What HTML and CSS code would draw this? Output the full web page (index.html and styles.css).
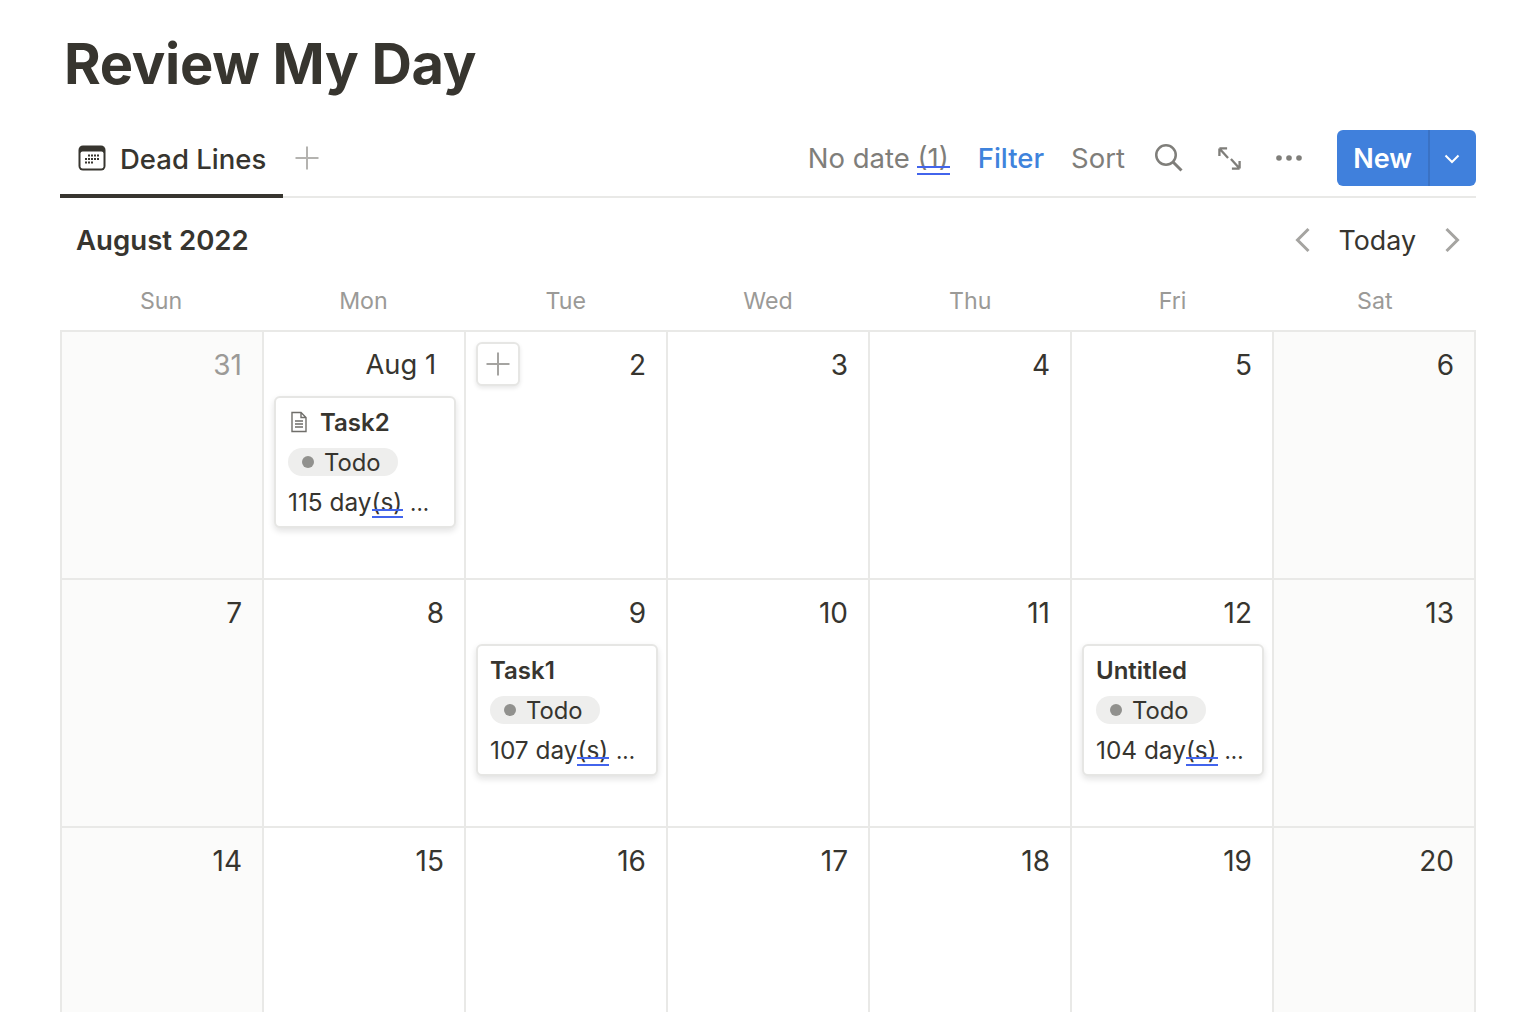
FILE: index.html
```html
<!DOCTYPE html>
<html lang="en">
<head>
<meta charset="utf-8">
<title>Review My Day</title>
<link rel="stylesheet" href="styles.css">
</head>
<body>
<main class="page">
  <h1 class="title">Review My Day</h1>
  <div class="toolbar">
    <div class="tab">
      <svg class="tab-icon" width="28" height="26" viewBox="0 0 28 26"><rect x="0.500" y="0.500" width="27" height="25" rx="4.500" fill="#37352f"/><rect x="2.500" y="6.500" width="23" height="17" rx="2" fill="#fff"/><g fill="#37352f"><rect x="10" y="9.500" width="2" height="2"/><rect x="13" y="9.500" width="2" height="2"/><rect x="16" y="9.500" width="2" height="2"/><rect x="19" y="9.500" width="2" height="2"/><rect x="7" y="13" width="2" height="2"/><rect x="10" y="13" width="2" height="2"/><rect x="13" y="13" width="2" height="2"/><rect x="16" y="13" width="2" height="2"/><rect x="19" y="13" width="2" height="2"/><rect x="7" y="16.500" width="2" height="2"/><rect x="10" y="16.500" width="2" height="2"/><rect x="13" y="16.500" width="2" height="2"/></g></svg>
      <span>Dead Lines</span>
    </div>
    <svg class="add-view" width="26" height="26" viewBox="0 0 26 26"><path d="M13 1.500v23M1.500 13h23" stroke="#b4b3b0" stroke-width="2" fill="none"/></svg>
    <div class="actions">
      <span class="action no-date">No date <span class="spell">(1)</span></span>
      <span class="action filter">Filter</span>
      <span class="action sort">Sort</span>
      <svg class="ico-search" width="30" height="30" viewBox="0 0 30 30"><circle cx="12" cy="12" r="9.750" fill="none" stroke="#7f7e7a" stroke-width="2.500"/><path d="M19 19l8.500 8.500" stroke="#7f7e7a" stroke-width="3" fill="none"/></svg>
      <svg class="ico-expand" width="25" height="25" viewBox="0 0 26 26"><path d="M2.500 2.500l9 10M2.500 2.500v8M2.500 2.500h8M23.500 23.500l-9-10M23.500 23.500v-8M23.500 23.500h-8" stroke="#7f7e7a" stroke-width="2.400" fill="none"/></svg>
      <svg class="ico-more" width="28" height="8" viewBox="0 0 28 8"><circle cx="4" cy="4" r="2.800" fill="#7f7e7a"/><circle cx="14" cy="4" r="2.800" fill="#7f7e7a"/><circle cx="24" cy="4" r="2.800" fill="#7f7e7a"/></svg>
      <div class="new-btn">
        <span class="new-label">New</span>
        <span class="new-arrow"><svg width="16" height="10" viewBox="0 0 16 10"><path d="M1.500 1.500L8 8l6.500-6.500" stroke="#fff" stroke-width="2" fill="none"/></svg></span>
      </div>
    </div>
  </div>

  <div class="month-bar">
    <span class="month">August 2022</span>
    <div class="month-nav">
      <svg width="16" height="26" viewBox="0 0 16 26"><path d="M13.500 2L2.500 13l11 11" stroke="#a5a4a1" stroke-width="3" fill="none"/></svg>
      <span class="today">Today</span>
      <svg width="16" height="26" viewBox="0 0 16 26"><path d="M2.500 2l11 11-11 11" stroke="#a5a4a1" stroke-width="3" fill="none"/></svg>
    </div>
  </div>

  <div class="weekdays">
    <span>Sun</span><span>Mon</span><span>Tue</span><span>Wed</span><span>Thu</span><span>Fri</span><span>Sat</span>
  </div>

  <div class="calendar">
    <div class="cell weekend"><div class="date muted">31</div></div>
    <div class="cell">
      <div class="date date-aug">Aug 1</div>
      <article class="card">
        <div class="card-title"><svg class="doc" width="20" height="22" viewBox="0 0 20 22"><path d="M3 1.500h9l5 5V20.500H3zM12 1.500v5h5" fill="none" stroke="#6f6e6a" stroke-width="1.400"/><path d="M6 10h8M6 13h8M6 16h8" stroke="#6f6e6a" stroke-width="1.400"/></svg><span>Task2</span></div>
        <div class="tag"><i class="dot"></i>Todo</div>
        <div class="days">115 day<span class="spell">(s)</span> <span class="more">...</span></div>
      </article>
    </div>
    <div class="cell">
      <div class="date">2</div>
      <button class="cell-add" aria-label="Add"><svg width="26" height="26" viewBox="0 0 26 26"><path d="M13 1.500v23M1.500 13h23" stroke="#a5a4a1" stroke-width="2" fill="none"/></svg></button>
    </div>
    <div class="cell"><div class="date">3</div></div>
    <div class="cell"><div class="date">4</div></div>
    <div class="cell"><div class="date">5</div></div>
    <div class="cell weekend"><div class="date">6</div></div>

    <div class="cell weekend"><div class="date">7</div></div>
    <div class="cell"><div class="date">8</div></div>
    <div class="cell">
      <div class="date">9</div>
      <article class="card">
        <div class="card-title"><span>Task1</span></div>
        <div class="tag"><i class="dot"></i>Todo</div>
        <div class="days">107 day<span class="spell">(s)</span> <span class="more">...</span></div>
      </article>
    </div>
    <div class="cell"><div class="date">10</div></div>
    <div class="cell"><div class="date">11</div></div>
    <div class="cell">
      <div class="date">12</div>
      <article class="card">
        <div class="card-title"><span>Untitled</span></div>
        <div class="tag"><i class="dot"></i>Todo</div>
        <div class="days">104 day<span class="spell">(s)</span> <span class="more">...</span></div>
      </article>
    </div>
    <div class="cell weekend"><div class="date">13</div></div>

    <div class="cell weekend"><div class="date">14</div></div>
    <div class="cell"><div class="date">15</div></div>
    <div class="cell"><div class="date">16</div></div>
    <div class="cell"><div class="date">17</div></div>
    <div class="cell"><div class="date">18</div></div>
    <div class="cell"><div class="date">19</div></div>
    <div class="cell weekend"><div class="date">20</div></div>
  </div>
</main>
</body>
</html>
```
FILE: styles.css
```css
* { box-sizing: border-box; }
html, body { margin: 0; height: 1012px; overflow: hidden; background: #fff; }
body { font-family: Inter, "Liberation Sans", sans-serif; color: #37352f; }
.page { width: 1416px; height: 1012px; overflow: hidden; margin-left: 60px; }
.title { margin: 0; padding: 30px 0 0 4px; height: 130px; font-size: 56px; line-height: 68px; font-weight: 700; letter-spacing: -0.3px; color: #37352f; }
.toolbar { display: flex; align-items: flex-start; height: 68px; border-bottom: 2px solid #e9e9e7; }
.tab { display: flex; align-items: center; gap: 14px; width: 223px; height: 68px; padding: 0 0 6px 18px; border-bottom: 4px solid #37352f; font-size: 27.5px; font-weight: 500; }
.tab-icon { flex: none; width: 28px; height: 26px; margin-top: -2px; }
.add-view { margin: 15px 0 0 11px; }
.actions { margin-left: auto; display: flex; align-items: flex-start; height: 56px; }
.action { font-size: 27.5px; line-height: 56px; font-weight: 400; color: #7f7e7a; }
.no-date { margin-right: 29px; }
.filter { color: #3f83dc; margin-right: 27px; font-weight: 500; }
.sort { margin-right: 29px; }
.spell { position: relative; }
.spell::after { content: ""; position: absolute; left: 0; right: -1px; bottom: -1px; height: 5px; border-top: 2px solid #4264ec; border-bottom: 2px solid #4264ec; }
.no-date .spell::after { bottom: 0; }
.ico-search { margin: 13px 0 0 0; }
.ico-expand { margin: 16px 1px 0 33px; }
.ico-more { margin: 24px 0 0 32px; }
.new-btn { margin-left: 34px; display: flex; width: 139px; height: 56px; background: #4080dc; border-radius: 6px; color: #fff; }
.new-label { flex: none; width: 93px; text-align: center; font-size: 27px; line-height: 57px; font-weight: 600; border-right: 2px solid #3a72c4; }
.new-arrow { flex: 1; display: flex; align-items: center; justify-content: center; padding: 2px 3px 0 0; }
.month-bar { display: flex; align-items: center; justify-content: space-between; height: 84px; padding: 0 16px; }
.month { font-size: 27.6px; font-weight: 600; }
.month-nav { display: flex; align-items: center; gap: 28px; font-size: 26.8px; }
.today { font-weight: 400; }
.weekdays { display: grid; grid-template-columns: repeat(7, 1fr); height: 48px; }
.weekdays span { text-align: center; font-size: 23.2px; line-height: 38px; color: #9b9a97; }
.calendar { display: grid; grid-template-columns: repeat(7, 202px); grid-auto-rows: 248px; border-left: 2px solid #e9e9e7; border-top: 2px solid #e9e9e7; width: 1416px; }
.cell { position: relative; border-right: 2px solid #e9e9e7; border-bottom: 2px solid #e9e9e7; padding: 0 10px; }
.weekend { background: #fbfbfa; }
.date { height: 64px; padding: 14px 10px 0 0; font-size: 28px; line-height: 38px; text-align: right; color: #37352f; }
.muted { color: #9b9a97; }
.date-aug { padding-right: 18px; font-size: 27.3px; }
.card { width: 182px; height: 132px; padding: 10px 14px 0 12px; background: #fff; border-radius: 6px; border: 2px solid #e6e6e4; box-shadow: 0 3px 6px rgba(15,15,15,0.12); }
.card-title { display: flex; align-items: center; height: 28px; gap: 11px; font-size: 24px; font-weight: 600; }
.doc { flex: none; margin-left: 1px; width: 20px; height: 22px; }
.tag { display: inline-flex; align-items: center; margin-top: 12px; width: 110px; height: 28px; padding-left: 14px; border-radius: 14px; background: #eeeeed; font-size: 23.8px; }
.dot { flex: none; width: 12px; height: 12px; margin-right: 10px; border-radius: 50%; background: #91918e; }
.days { margin-top: 10px; font-size: 24.4px; line-height: 32px; white-space: nowrap; }
.more { margin-left: 1px; font-size: 22px; }
.cell-add { position: absolute; top: 10px; left: 10px; width: 44px; height: 44px; padding: 0; display: flex; align-items: center; justify-content: center; background: #fff; border: 2px solid #e6e6e4; border-radius: 6px; box-shadow: 0 2px 4px rgba(15,15,15,0.1); }
```
